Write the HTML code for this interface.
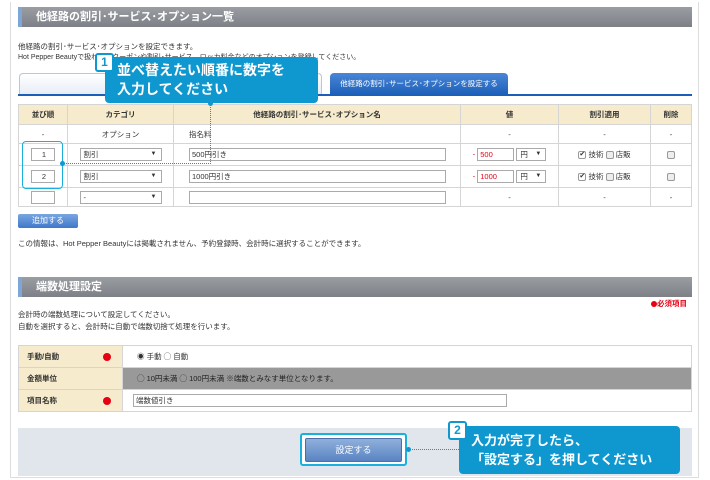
<!DOCTYPE html>
<html><head><meta charset="utf-8">
<style>
*{margin:0;padding:0;box-sizing:border-box}
body{width:710px;height:480px;position:relative;background:#fff;font-family:"Liberation Sans","Noto Sans CJK JP",sans-serif;font-size:8px;color:#333;overflow:hidden}
.a{position:absolute}
.frame{left:10px;top:2px;width:689px;height:476px;border:1px solid #ddd;border-top:none}
.hdr{height:20px;background:linear-gradient(#9a9ea3,#7d8187);color:#fff;font-size:11px;font-weight:bold;line-height:20px;padding-left:14px;border-left:4px solid #7ea6d6}
table{border-collapse:collapse;position:absolute}
td{border:1px solid #d5d5d5;text-align:center;font-size:7.5px;padding:0}
th{border:1px solid #d5d5d5;background:#f6ebcc;font-size:7.5px;font-weight:bold;color:#333}
.in{display:inline-block;border:1px solid #aaa;background:#fff;height:13px;line-height:11px;font-size:7.5px;text-align:left;padding-left:2px;vertical-align:middle}
.sel{display:inline-block;border:1px solid #aaa;background:#fff;height:13px;line-height:11px;font-size:7.5px;text-align:left;padding:0 3px;vertical-align:middle;position:relative}
.sel:after{content:"▼";position:absolute;right:4px;font-size:6px}
.cb{display:inline-block;width:8px;height:8px;border:1px solid #999;border-radius:2px;background:#eee;vertical-align:middle;font-size:7px;line-height:6px}
.call{background:#0f98cf;color:#fff;font-weight:bold;border-radius:4px}
.badge{background:#fff;border:2px solid #0f98cf;color:#0f98cf;font-weight:bold;font-size:12px;text-align:center;border-radius:3px;line-height:15px}
.t2 td{text-align:left;padding-left:8px}
.dot{display:inline-block;width:8px;height:8px;border-radius:50%;background:#e60012;vertical-align:middle}
</style></head><body>
<div class="a frame"></div>
<div class="a hdr" style="left:18px;top:7px;width:674px">他経路の割引･サービス･オプション一覧</div>
<div class="a" style="left:18px;top:41px;font-size:7.5px">他経路の割引･サービス･オプションを設定できます。</div>
<div class="a" style="left:18px;top:52px;font-size:7px">Hot Pepper Beautyで扱わないクーポンや割引･サービス、ロッカ料金などのオプションを登録してください。</div>

<div class="a" style="left:19px;top:73px;width:303px;height:22px;border:1px solid #b9c7d8;border-bottom:none;border-radius:4px 4px 0 0;background:linear-gradient(#fff,#e6edf6);color:#2456a4;font-weight:bold;font-size:9px;text-align:center;line-height:21px">メニューを設定する</div>
<div class="a" style="left:330px;top:73px;width:178px;height:22px;border-radius:4px 4px 0 0;background:linear-gradient(#4a86d6,#1c5fb8);color:#fff;font-size:7.5px;text-align:center;line-height:22px">他経路の割引･サービス･オプションを設定する</div>
<div class="a" style="left:18px;top:94px;width:674px;height:2px;background:#1c5fb8"></div>

<table style="left:18px;top:104px;width:674px">
<tr style="height:20px"><th style="width:49px">並び順</th><th style="width:106px">カテゴリ</th><th style="width:287px">他経路の割引･サービス･オプション名</th><th style="width:98px">値</th><th style="width:92px">割引適用</th><th>削除</th></tr>
<tr style="height:19px"><td>-</td><td>オプション</td><td style="text-align:left;padding-left:15px">指名料</td><td>-</td><td>-</td><td>-</td></tr>
<tr style="height:22px"><td><span class="in" style="width:24px;text-align:center">1</span></td><td><span class="sel" style="width:82px">割引</span></td><td style="text-align:left;padding-left:15px"><span class="in" style="width:257px">500円引き</span></td><td><span style="color:#e60012">-</span> <span class="in" style="width:37px;color:#e60012">500</span> <span class="sel" style="width:30px">円</span></td><td><span class="cb" style="background:#fff">✔</span> 技術 <span class="cb"></span> 店販</td><td><span class="cb"></span></td></tr>
<tr style="height:22px"><td><span class="in" style="width:24px;text-align:center">2</span></td><td><span class="sel" style="width:82px">割引</span></td><td style="text-align:left;padding-left:15px"><span class="in" style="width:257px">1000円引き</span></td><td><span style="color:#e60012">-</span> <span class="in" style="width:37px;color:#e60012">1000</span> <span class="sel" style="width:30px">円</span></td><td><span class="cb" style="background:#fff">✔</span> 技術 <span class="cb"></span> 店販</td><td><span class="cb"></span></td></tr>
<tr style="height:19px"><td><span class="in" style="width:24px"></span></td><td><span class="sel" style="width:82px">-</span></td><td style="text-align:left;padding-left:15px"><span class="in" style="width:257px"></span></td><td>-</td><td>-</td><td>-</td></tr>
</table>

<div class="a" style="left:18px;top:214px;width:60px;height:14px;border-radius:2px;background:linear-gradient(#79a6e0,#3f78c9);color:#fff;font-size:8px;text-align:center;line-height:14px">追加する</div>
<div class="a" style="left:18px;top:238px;font-size:7.5px">この情報は、Hot Pepper Beautyには掲載されません、予約登録時、会計時に選択することができます。</div>

<div class="a hdr" style="left:18px;top:277px;width:674px">端数処理設定</div>
<div class="a" style="left:651px;top:298px;color:#e60012;font-size:7.5px;font-weight:bold"><span class="dot" style="width:6px;height:6px"></span>必須項目</div>
<div class="a" style="left:18px;top:309px;font-size:7.5px">会計時の端数処理について設定してください。</div>
<div class="a" style="left:18px;top:321px;font-size:7.5px">自動を選択すると、会計時に自動で端数切捨て処理を行います。</div>

<table class="t2" style="left:18px;top:345px;width:674px">
<tr style="height:22px"><td style="width:80px;background:#f6ebcc;font-weight:bold;border-right:none">手動/自動</td><td style="width:24px;background:#f6ebcc;border-left:none;padding-left:4px"><span class="dot"></span></td><td style="padding-left:14px">◉ 手動 ◯ 自動</td></tr>
<tr style="height:22px"><td style="background:#f6ebcc;font-weight:bold;border-right:none">金額単位</td><td style="background:#f6ebcc;border-left:none"></td><td style="background:#999;padding-left:14px;color:#222">◯ 10円未満 ◯ 100円未満 ※端数とみなす単位となります。</td></tr>
<tr style="height:22px"><td style="background:#f6ebcc;font-weight:bold;border-right:none">項目名称</td><td style="background:#f6ebcc;border-left:none;padding-left:4px"><span class="dot"></span></td><td style="padding-left:10px"><span class="in" style="width:374px">端数値引き</span></td></tr>
</table>

<div class="a" style="left:18px;top:428px;width:674px;height:48px;background:#e1e5ec"></div>
<div class="a" style="left:300px;top:433px;width:107px;height:33px;border:2px solid #1ab0dd;border-radius:3px;background:#fff"></div>
<div class="a" style="left:305px;top:438px;width:97px;height:24px;border-radius:2px;background:linear-gradient(#8fb0dc,#5a84c2);border:1px solid #4a6fa8;color:#fff;font-size:9px;text-align:center;line-height:22px">設定する</div>
<div class="a" style="left:407px;top:449px;width:52px;border-top:1px dotted #0f98cf"></div>
<div class="a" style="left:406px;top:447px;width:5px;height:5px;border-radius:50%;background:#0f98cf"></div>
<div class="a call" style="left:459px;top:426px;width:221px;height:48px;font-size:13px;line-height:19px;padding:5px 0 0 12px">入力が完了したら、<br>「設定する」を押してください</div>
<div class="a badge" style="left:448px;top:421px;width:19px;height:19px">2</div>

<div class="a" style="left:210px;top:103px;height:61px;border-left:1px dotted #0f98cf"></div>
<div class="a" style="left:63px;top:163px;width:148px;border-top:1px dotted #0f98cf"></div>
<div class="a" style="left:22px;top:141px;width:41px;height:48px;border:1.5px solid #1ab0dd;border-radius:4px"></div>
<div class="a" style="left:60px;top:161px;width:5px;height:5px;border-radius:50%;background:#0f98cf"></div>
<div class="a" style="left:208px;top:101px;width:5px;height:5px;border-radius:50%;background:#0f98cf"></div>
<div class="a call" style="left:105px;top:57px;width:213px;height:46px;font-size:14px;line-height:19px;padding:4px 0 0 12px">並べ替えたい順番に数字を<br>入力してください</div>
<div class="a badge" style="left:95px;top:53px;width:19px;height:19px">1</div>
</body></html>
